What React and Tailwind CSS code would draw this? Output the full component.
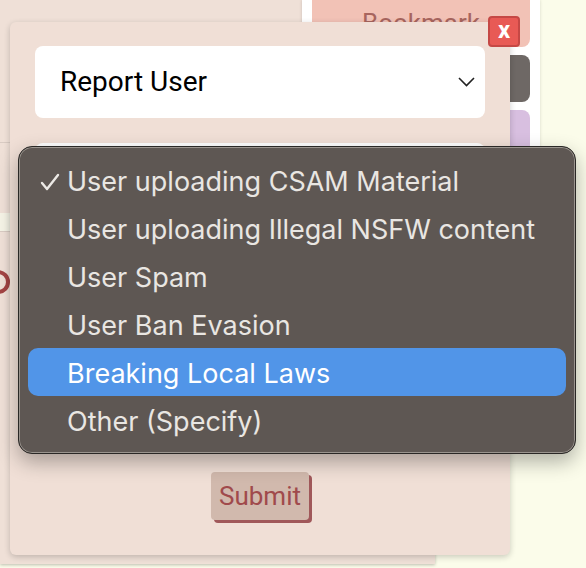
import React from 'react';

const reasons = [
  'User uploading CSAM Material',
  'User uploading Illegal NSFW content',
  'User Spam',
  'User Ban Evasion',
  'Breaking Local Laws',
  'Other (Specify)',
];

const App = () => {
  const selected = 0;
  const hovered = 4;

  return (
    <div className="relative w-[586px] h-[568px] overflow-hidden bg-[#fbfcea]" style={{ fontFamily: 'Roboto, sans-serif' }}>
      {/* page content behind the modal */}
      <div className="w-[435px] h-[564px] bg-[#efe0d7] shadow-[0_1px_3px_rgba(0,0,0,0.25)] flex flex-col">
        <div className="h-[143px] border-b border-[#d9cbc3]" />
        <div className="h-[70px]" />
        <div className="h-[19px] bg-[#f5f3e6] border-b border-[#d9cbc3]" />
        <div className="h-[38px]" />
        <div className="ml-[-14px] w-[24px] h-[24px] rounded-full border-[4px] border-[#a34444]" />
      </div>

      {/* sidebar */}
      <div className="absolute left-[302px] top-0 w-[238px] h-[300px] bg-white shadow-[0_0_3px_rgba(0,0,0,0.15)] flex flex-col gap-2 px-[10px]">
        <div className="h-[47px] rounded-b-lg bg-[#f2c2b6] text-[#a8655e] text-[26px] flex items-center justify-center">Bookmark</div>
        <div className="h-[47px] rounded-lg bg-[#6e6865]" />
        <div className="h-[60px] rounded-lg bg-[#d8bfe0]" />
      </div>

      {/* modal */}
      <div className="absolute left-[10px] top-[22px] w-[500px] h-[533px] rounded-md bg-[#f0dfd6] shadow-[0_2px_6px_rgba(0,0,0,0.2)] flex flex-col items-center px-[25px] pt-[24px]">
        <div className="w-full h-[72px] rounded-lg bg-white flex items-center justify-between pl-[25px] pr-[10px]">
          <span className="text-[28px] text-black">Report User</span>
          <svg width="17" height="10" viewBox="0 0 17 10" fill="none">
            <path d="M1 1l7.5 7.5L16 1" stroke="#222" strokeWidth="1.6" />
          </svg>
        </div>
        <div className="w-full h-[300px] mt-[25px] rounded-lg bg-white" />
        <button className="mt-[29px] h-[48px] px-[8px] rounded bg-[#d1b9ad] text-[#a04a4c] text-[26px] shadow-[3px_3px_0_#a0585a]">Submit</button>
      </div>

      {/* close button */}
      <button className="absolute left-[488px] top-[16px] w-[32px] h-[31px] rounded bg-[#e85a55] border-2 border-[#c54845] text-white font-bold text-[24px] leading-none flex items-center justify-center pb-[3px]">x</button>

      {/* open select popup */}
      <div className="absolute left-[18px] top-[146px] w-[558px] h-[308px] rounded-[14px] bg-[#5e5753] border border-[#2a2826] shadow-[inset_0_0_0_1px_#9a948e,0_8px_20px_rgba(0,0,0,0.3)] py-[9px] px-[9px] flex flex-col" style={{ fontFamily: 'Inter, sans-serif' }}>
        {reasons.map((r, i) => (
          <div key={r} className={`h-[48px] flex items-center rounded-[10px] ${i === hovered ? 'bg-[#5195e8] text-white' : 'text-[#e9e6e2]'}`}>
            <span className="w-[39px] flex justify-end pr-[7px] pt-[3px]">
              {i === selected && (
                <svg width="20" height="18" viewBox="0 0 20 18" fill="none">
                  <path d="M2 10l5 6L18 2" stroke="#ece9e5" strokeWidth="2.4" strokeLinecap="round" strokeLinejoin="round" />
                </svg>
              )}
            </span>
            <span className="text-[27px] pt-[5px]">{r}</span>
          </div>
        ))}
      </div>
    </div>
  );
};

export default App;
